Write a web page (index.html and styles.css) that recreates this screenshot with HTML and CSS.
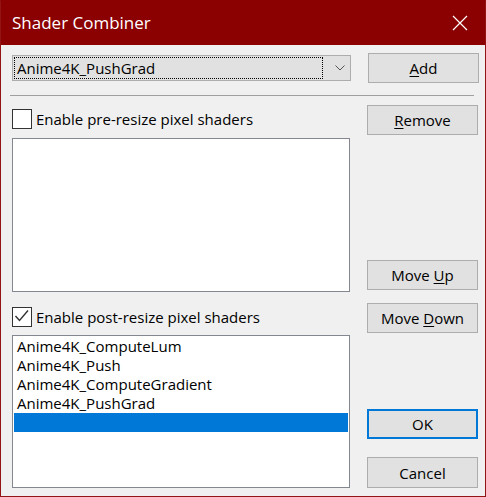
FILE: index.html
```html
<!DOCTYPE html>
<html>
<head>
<meta charset="utf-8">
<link rel="stylesheet" href="styles.css">
</head>
<body>
<div class="window">
  <div class="titlebar">
    <span class="title">Shader Combiner</span>
    <svg class="close" width="16" height="16" viewBox="0 0 16 16"><path d="M1 1L15 15M15 1L1 15" stroke="#fff" stroke-width="1.2" fill="none"/></svg>
  </div>
  <div class="client">
    <div class="toprow">
      <div class="combo">
        <div class="combo-focus">Anime4K_PushGrad</div>
        <svg class="chev" width="10" height="6" viewBox="0 0 10 6"><path d="M0.5 0.5L5 5L9.5 0.5" stroke="#555" stroke-width="1" fill="none"/></svg>
      </div>
      <div class="btn"><span><u>A</u>dd</span></div>
    </div>
    <div class="sep"></div>
    <div class="main">
      <div class="leftcol">
        <div class="checkrow first">
          <span class="box"></span>
          <span class="label">Enable pre-resize pixel shaders</span>
        </div>
        <div class="list pre"></div>
        <div class="checkrow second">
          <span class="box"><svg width="18" height="18" viewBox="0 0 18 18"><path d="M2.5 8L6.5 12.5L15 2.5" stroke="#333" stroke-width="1.4" fill="none"/></svg></span>
          <span class="label">Enable post-resize pixel shaders</span>
        </div>
        <div class="list post">
          <div class="item">Anime4K_ComputeLum</div>
          <div class="item">Anime4K_Push</div>
          <div class="item">Anime4K_ComputeGradient</div>
          <div class="item">Anime4K_PushGrad</div>
          <div class="item selected"></div>
        </div>
      </div>
      <div class="rightcol">
        <div class="btn"><span><u>R</u>emove</span></div>
        <div class="btn moveup"><span>Move <u>U</u>p</span></div>
        <div class="btn movedown"><span>Move <u>D</u>own</span></div>
        <div class="btn ok"><span>OK</span></div>
        <div class="btn cancel"><span>Cancel</span></div>
      </div>
    </div>
  </div>
</div>
</body>
</html>
```

FILE: styles.css
```css
html, body {
  margin: 0;
  padding: 0;
  background: #f0f0f0;
}
body {
  font-family: "Open Sans", "Noto Sans", sans-serif;
  font-size: 15px;
  color: #000;
}
.window {
  width: 484px;
  height: 495px;
  border: 1px solid #931414;
  border-top-color: #8b0000;
  background: #f0f0f0;
  overflow: hidden;
}
.titlebar {
  height: 44px;
  background: #8b0000;
  display: flex;
  align-items: center;
  justify-content: space-between;
  padding: 0 17px 0 11px;
  color: #fff;
  margin-top: -1px;
  padding-top: 1px;
}
.title {
  font-size: 17px;
  margin-top: -2px;
}
.close {
  display: block;
}
.client {
  padding: 8px 6px 0 11px;
}
.toprow {
  display: flex;
  align-items: center;
  gap: 17px;
}
.combo {
  width: 336px;
  height: 24px;
  border: 1px solid #adadad;
  background: #e1e1e1;
  display: flex;
  align-items: center;
  padding-left: 1px;
}
.combo-focus {
  width: 305px;
  height: 20px;
  border: 1px dotted #000;
  line-height: 20px;
  padding-left: 2px;
  white-space: nowrap;
}
.chev {
  margin-left: 12px;
}
.btn {
  width: 109px;
  height: 28px;
  border: 1px solid #adadad;
  background: #e1e1e1;
  display: flex;
  align-items: center;
  justify-content: center;
  box-sizing: content-box;
  white-space: nowrap;
}
.btn u {
  text-decoration-thickness: 1px;
  text-underline-offset: 2px;
}
.sep {
  margin: 12px 0 0 -2px;
  width: 464px;
  height: 1px;
  background: #a0a0a0;
}
.main {
  display: flex;
  gap: 17px;
  margin-top: 9px;
}
.leftcol {
  width: 338px;
  display: flex;
  flex-direction: column;
}
.checkrow {
  height: 20px;
  display: flex;
  align-items: center;
  gap: 4px;
}
.checkrow.first {
  margin-top: 4px;
  margin-bottom: 9px;
}
.checkrow.second {
  margin-top: 15px;
  margin-bottom: 8px;
}
.box {
  width: 18px;
  height: 18px;
  border: 1px solid #333;
  background: #fff;
  display: block;
  flex: none;
}
.box svg {
  display: block;
}
.label {
  white-space: nowrap;
}
.list {
  border: 1px solid #828790;
  background: #fff;
  padding: 1px;
  box-sizing: border-box;
}
.list.pre {
  height: 154px;
}
.list.post {
  height: 153px;
}
.item {
  height: 19px;
  line-height: 19px;
  padding-left: 3px;
  white-space: nowrap;
}
.item.selected {
  background: #0078d7;
}
.rightcol {
  display: flex;
  flex-direction: column;
}
.moveup {
  margin-top: 125px;
}
.movedown {
  margin-top: 13px;
}
.ok {
  margin-top: 76px;
  border: 2px solid #0078d7;
  width: 107px;
  height: 26px;
}
.cancel {
  margin-top: 18px;
  height: 29px;
}
```
